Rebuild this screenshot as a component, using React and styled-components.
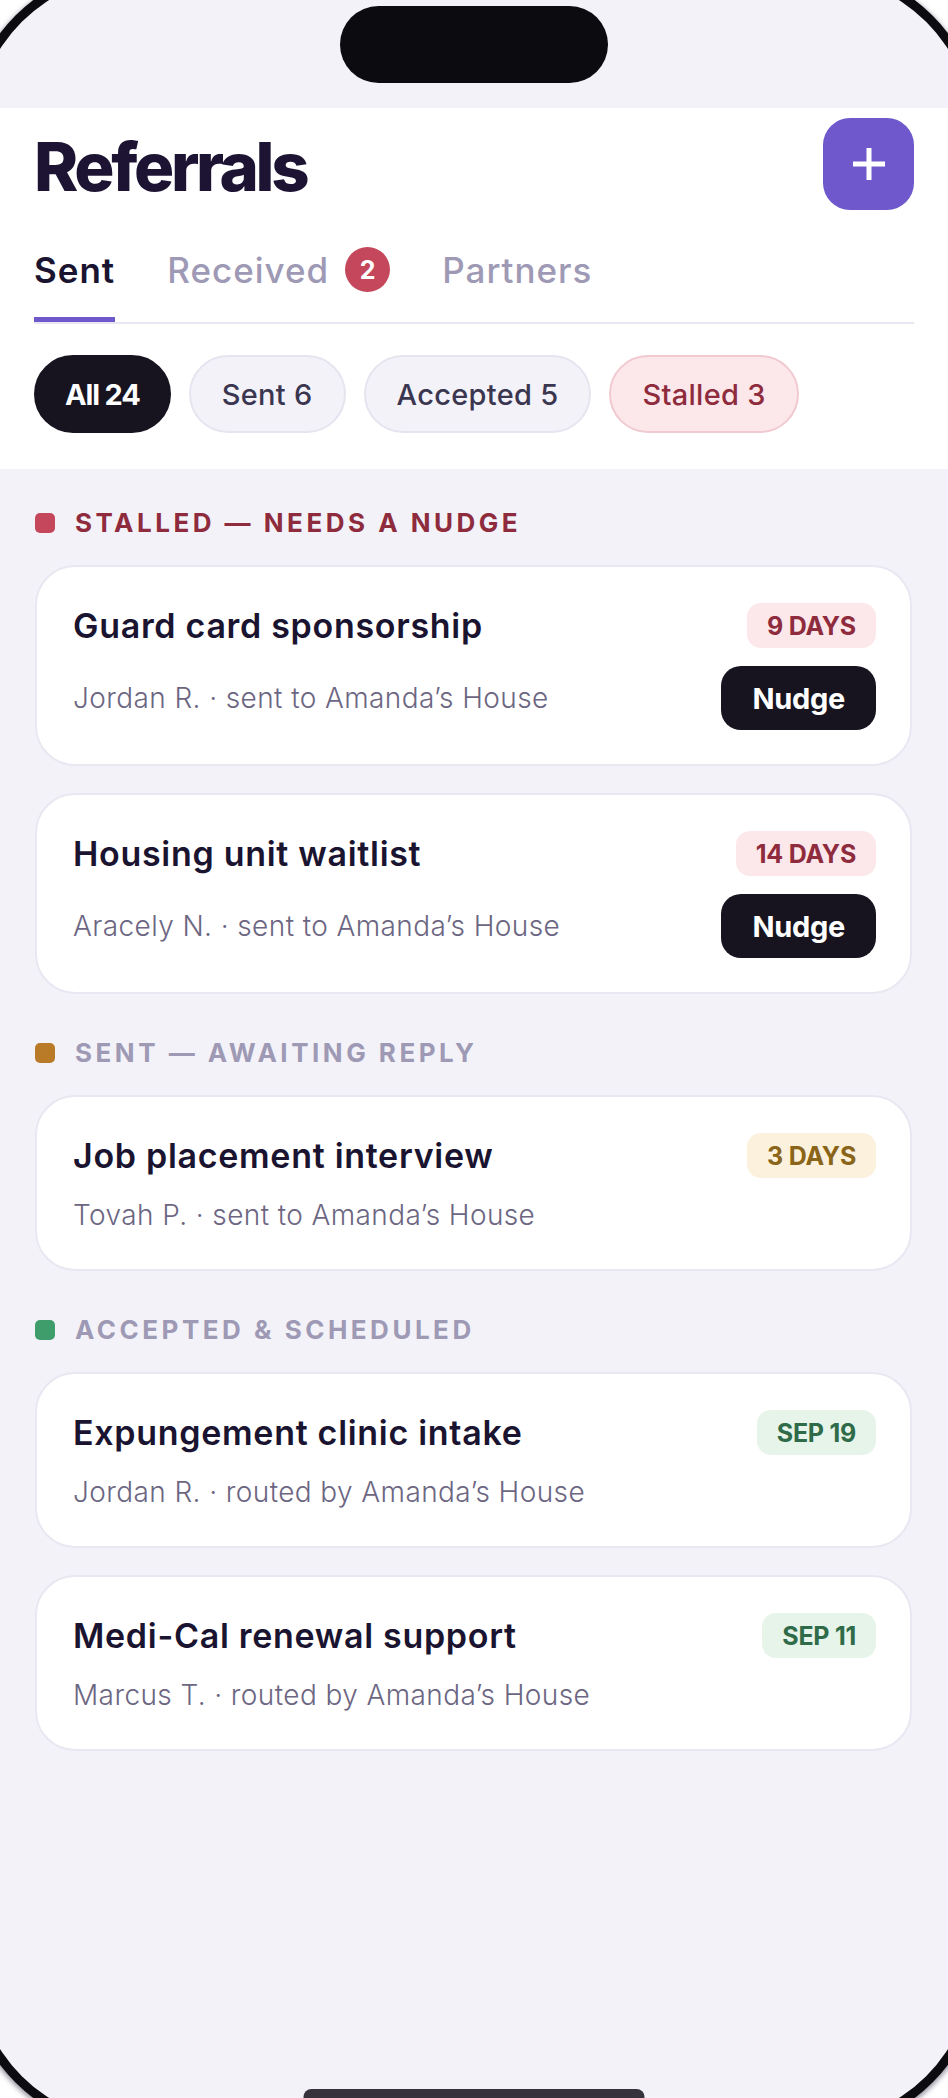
import React from "react";
import styled, { createGlobalStyle } from "styled-components";

const GlobalStyle = createGlobalStyle`
  html, body {
    margin: 0;
    padding: 0;
    background: #ffffff;
  }
  body {
    font-family: "Inter", "Noto Sans", sans-serif;
    -webkit-font-smoothing: antialiased;
  }
  * {
    box-sizing: border-box;
  }
`;

const sections = [
  {
    key: "stalled",
    label: "STALLED — NEEDS A NUDGE",
    dot: "#c4475b",
    color: "#8e2b3d",
    cards: [
      {
        title: "Guard card sponsorship",
        sub: "Jordan R. · sent to Amanda’s House",
        badge: "9 DAYS",
        tone: "red",
        nudge: true,
      },
      {
        title: "Housing unit waitlist",
        sub: "Aracely N. · sent to Amanda’s House",
        badge: "14 DAYS",
        tone: "red",
        nudge: true,
      },
    ],
  },
  {
    key: "sent",
    label: "SENT — AWAITING REPLY",
    dot: "#b97b27",
    color: "#9e99b4",
    cards: [
      {
        title: "Job placement interview",
        sub: "Tovah P. · sent to Amanda’s House",
        badge: "3 DAYS",
        tone: "amber",
      },
    ],
  },
  {
    key: "accepted",
    label: "ACCEPTED & SCHEDULED",
    dot: "#3f9d6b",
    color: "#9e99b4",
    cards: [
      {
        title: "Expungement clinic intake",
        sub: "Jordan R. · routed by Amanda’s House",
        badge: "SEP 19",
        tone: "green",
      },
      {
        title: "Medi-Cal renewal support",
        sub: "Marcus T. · routed by Amanda’s House",
        badge: "SEP 11",
        tone: "green",
      },
    ],
  },
];

const filters = [
  { label: "All 24", kind: "active" },
  { label: "Sent 6", kind: "plain" },
  { label: "Accepted 5", kind: "plain" },
  { label: "Stalled 3", kind: "alert" },
];

const tones = {
  red: { bg: "#fce8eb", fg: "#8e2b3d" },
  amber: { bg: "#fbf1dc", fg: "#8a6418" },
  green: { bg: "#e6f4ea", fg: "#2f6b48" },
};

const chipKinds = {
  active: { bg: "#17141f", border: "#17141f", fg: "#ffffff", weight: 700, track: "-0.04em", pad: 29 },
  plain: { bg: "#f3f2f8", border: "#e6e4ef", fg: "#3b3650", weight: 500, track: "0.01em", pad: 31 },
  alert: { bg: "#fce8eb", border: "#f1c9d0", fg: "#8e2b3d", weight: 500, track: "0.01em", pad: 31 },
};

function Referrals() {
  return (
    <Device>
      <Screen>
        <StatusBar>
          <Island />
        </StatusBar>

        <Header>
          <TitleRow>
            <Title>Referrals</Title>
            <AddButton aria-label="New referral">
              <svg width="34" height="34" viewBox="0 0 34 34">
                <path d="M17 1v32M1 17h32" stroke="#fff" strokeWidth="5" />
              </svg>
            </AddButton>
          </TitleRow>

          <Tabs>
            <Tab $active>Sent</Tab>
            <Tab>
              Received
              <CountBadge>2</CountBadge>
            </Tab>
            <Tab>Partners</Tab>
          </Tabs>

          <Chips>
            {filters.map((f) => (
              <Chip key={f.label} $kind={f.kind}>
                {f.label}
              </Chip>
            ))}
          </Chips>
        </Header>

        <Feed>
          {sections.map((section) => (
            <Section key={section.key}>
              <SectionHead $color={section.color}>
                <Dot $color={section.dot} />
                {section.label}
              </SectionHead>
              <CardList>
                {section.cards.map((card) => (
                  <Card key={card.title}>
                    <CardTitle>{card.title}</CardTitle>
                    <Badge $tone={card.tone}>{card.badge}</Badge>
                    <CardSub>{card.sub}</CardSub>
                    {card.nudge ? <NudgeButton>Nudge</NudgeButton> : <span />}
                  </Card>
                ))}
              </CardList>
            </Section>
          ))}
        </Feed>

        <HomeIndicator />
      </Screen>
    </Device>
  );
}

const Device = styled.div`
  width: 948px;
  height: 2098px;
  overflow: hidden;
  background: #ffffff;
`;

const Screen = styled.div`
  position: relative;
  margin: -25px;
  width: 998px;
  height: 2148px;
  padding: 25px;
  border-radius: 160px;
  background: #f3f2f8;
  box-shadow: 0 0 0 9px #0c0b10, 0 2px 5px 10px rgba(70, 64, 88, 0.55);
  overflow: hidden;
`;

const StatusBar = styled.div`
  height: 108px;
  display: flex;
  justify-content: center;
  padding-top: 6px;
`;

const Island = styled.div`
  width: 268px;
  height: 77px;
  border-radius: 39px;
  background: #0c0b10;
`;

const Header = styled.header`
  background: #ffffff;
  padding: 10px 34px 36px 34px;
`;

const TitleRow = styled.div`
  height: 92px;
  display: flex;
  align-items: center;
  justify-content: space-between;
`;

const Title = styled.h1`
  margin: 4px 0 0 0;
  font-size: 67px;
  line-height: 1;
  font-weight: 800;
  letter-spacing: -0.05em;
  color: #1c1432;
`;

const AddButton = styled.button`
  width: 91px;
  height: 92px;
  border: none;
  border-radius: 27px;
  background: #6e58cc;
  display: flex;
  align-items: center;
  justify-content: center;
  padding: 0;
`;

const Tabs = styled.nav`
  margin-top: 37px;
  display: flex;
  gap: 52px;
  border-bottom: 2px solid #e8e6f0;
`;

const Tab = styled.div`
  display: flex;
  align-items: center;
  gap: 16px;
  min-height: 45px;
  padding-bottom: 25px;
  border-bottom: 5px solid ${(p) => (p.$active ? "#6e58cc" : "transparent")};
  box-sizing: content-box;
  font-size: 35px;
  line-height: 40px;
  font-weight: ${(p) => (p.$active ? 600 : 500)};
  color: ${(p) => (p.$active ? "#1a1430" : "#9e99b4")};
  letter-spacing: 1px;
`;

const CountBadge = styled.span`
  width: 45px;
  height: 45px;
  border-radius: 50%;
  background: #c4475b;
  color: #ffffff;
  font-size: 25px;
  font-weight: 700;
  letter-spacing: 0;
  display: flex;
  align-items: center;
  justify-content: center;
`;

const Chips = styled.div`
  margin-top: 31px;
  display: flex;
  gap: 18px;
`;

const Chip = styled.button`
  height: 78px;
  padding: 0 ${(p) => chipKinds[p.$kind].pad}px;
  border-radius: 39px;
  border: 2px solid ${(p) => chipKinds[p.$kind].border};
  background: ${(p) => chipKinds[p.$kind].bg};
  color: ${(p) => chipKinds[p.$kind].fg};
  font-family: inherit;
  font-size: 29px;
  font-weight: ${(p) => chipKinds[p.$kind].weight};
  letter-spacing: ${(p) => chipKinds[p.$kind].track};
`;

const Feed = styled.main`
  padding: 36px 36px 0 35px;
  display: flex;
  flex-direction: column;
  gap: 41px;
`;

const Section = styled.section`
  display: flex;
  flex-direction: column;
  gap: 24px;
`;

const SectionHead = styled.h2`
  margin: 0;
  height: 36px;
  display: flex;
  align-items: center;
  gap: 20px;
  font-size: 26px;
  line-height: 36px;
  font-weight: 700;
  letter-spacing: 3.5px;
  color: ${(p) => p.$color};
`;

const Dot = styled.span`
  width: 20px;
  height: 20px;
  border-radius: 5px;
  background: ${(p) => p.$color};
`;

const CardList = styled.div`
  display: flex;
  flex-direction: column;
  gap: 27px;
`;

const Card = styled.article`
  background: #ffffff;
  border: 2px solid #e9e7f1;
  border-radius: 40px;
  padding: 36px 34px 34px 36px;
  display: grid;
  grid-template-columns: 1fr auto;
  row-gap: 18px;
  align-items: center;
`;

const CardTitle = styled.h3`
  margin: 0;
  font-size: 34px;
  line-height: 45px;
  font-weight: 600;
  letter-spacing: 0.7px;
  color: #1a1430;
`;

const CardSub = styled.p`
  margin: 0;
  font-size: 28px;
  line-height: 39px;
  font-weight: 300;
  color: #6c6682;
  letter-spacing: 0.4px;
`;

const Badge = styled.span`
  justify-self: end;
  height: 45px;
  padding: 0 20px;
  border-radius: 14px;
  display: flex;
  align-items: center;
  background: ${(p) => tones[p.$tone].bg};
  color: ${(p) => tones[p.$tone].fg};
  font-size: 25px;
  font-weight: 700;
  letter-spacing: -0.01em;
`;

const NudgeButton = styled.button`
  justify-self: end;
  height: 64px;
  padding: 0 31px;
  border: none;
  border-radius: 20px;
  background: #17141f;
  color: #ffffff;
  font-family: inherit;
  font-size: 29px;
  font-weight: 700;
  letter-spacing: -0.01em;
`;

const HomeIndicator = styled.div`
  position: absolute;
  left: 50%;
  bottom: 18px;
  transform: translateX(-50%);
  width: 341px;
  height: 16px;
  border-radius: 8px;
  background: #37333d;
`;

export default function App() {
  return (
    <>
      <GlobalStyle />
      <Referrals />
    </>
  );
}
